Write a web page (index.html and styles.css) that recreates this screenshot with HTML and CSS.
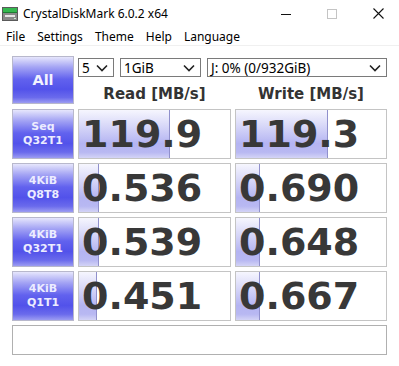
FILE: index.html
```html
<!DOCTYPE html>
<html lang="en">
<head>
    <meta charset="UTF-8">
    <title>CrystalDiskMark 6.0.2 x64</title>
    <link rel="stylesheet" href="styles.css">
</head>
<body>
    <div class="window">
        <div class="titlebar">
            <svg class="app-icon" width="16" height="14" viewBox="0 0 16 14">
                <rect x="0.5" y="0.5" width="15" height="13" fill="#8a8a8a" stroke="#5a5a5a"/>
                <rect x="1" y="1" width="14" height="4" fill="#35b84f"/>
                <rect x="1" y="5" width="14" height="1" fill="#1f7d33"/>
                <rect x="3" y="8" width="10" height="2" fill="#e6e6e6"/>
                <rect x="12" y="11" width="2" height="1" fill="#cfe9d4"/>
            </svg>
            <span class="title">CrystalDiskMark 6.0.2 x64</span>
            <div class="controls">
                <div class="ctrl">
                    <svg width="10" height="10" viewBox="0 0 10 10"><line x1="0" y1="5.5" x2="10" y2="5.5" stroke="#111" stroke-width="1"/></svg>
                </div>
                <div class="ctrl">
                    <svg width="10" height="10" viewBox="0 0 10 10"><rect x="0.5" y="0.5" width="9" height="9" fill="none" stroke="#c4c4c4" stroke-width="1"/></svg>
                </div>
                <div class="ctrl">
                    <svg width="11" height="11" viewBox="0 0 11 11"><path d="M0.5 0.5 L10.5 10.5 M10.5 0.5 L0.5 10.5" stroke="#111" stroke-width="1.1"/></svg>
                </div>
            </div>
        </div>

        <div class="menubar">
            <span class="menu-item">File</span>
            <span class="menu-item">Settings</span>
            <span class="menu-item">Theme</span>
            <span class="menu-item">Help</span>
            <span class="menu-item">Language</span>
        </div>

        <div class="main">
            <div class="row top-row">
                <div class="label all-btn">All</div>
                <div class="top-right">
                    <div class="combos">
                        <div class="combo combo-count"><span>5</span><svg width="12" height="8" viewBox="0 0 12 8"><polyline points="1,1.5 6,6.5 11,1.5" fill="none" stroke="#222" stroke-width="1.6"/></svg></div>
                        <div class="combo combo-size"><span>1GiB</span><svg width="12" height="8" viewBox="0 0 12 8"><polyline points="1,1.5 6,6.5 11,1.5" fill="none" stroke="#222" stroke-width="1.6"/></svg></div>
                        <div class="combo combo-drive"><span>J: 0% (0/932GiB)</span><svg width="12" height="8" viewBox="0 0 12 8"><polyline points="1,1.5 6,6.5 11,1.5" fill="none" stroke="#222" stroke-width="1.6"/></svg></div>
                    </div>
                    <div class="headers">
                        <div class="col-head">Read [MB/s]</div>
                        <div class="col-head">Write [MB/s]</div>
                    </div>
                </div>
            </div>

            <div class="row">
                <div class="label">Seq<br>Q32T1</div>
                <div class="value"><div class="meter" style="width: 91px"></div><span>119.9</span></div>
                <div class="value"><div class="meter" style="width: 92px"></div><span>119.3</span></div>
            </div>
            <div class="row">
                <div class="label">4KiB<br>Q8T8</div>
                <div class="value"><div class="meter" style="width: 20px"></div><span>0.536</span></div>
                <div class="value"><div class="meter" style="width: 24px"></div><span>0.690</span></div>
            </div>
            <div class="row">
                <div class="label">4KiB<br>Q32T1</div>
                <div class="value"><div class="meter" style="width: 20px"></div><span>0.539</span></div>
                <div class="value"><div class="meter" style="width: 24px"></div><span>0.648</span></div>
            </div>
            <div class="row">
                <div class="label">4KiB<br>Q1T1</div>
                <div class="value"><div class="meter" style="width: 18px"></div><span>0.451</span></div>
                <div class="value"><div class="meter" style="width: 24px"></div><span>0.667</span></div>
            </div>

            <div class="comment"></div>
        </div>
    </div>
</body>
</html>
```

FILE: styles.css
```css
* {
    box-sizing: border-box;
    margin: 0;
    padding: 0;
}

body {
    width: 399px;
    height: 366px;
    overflow: hidden;
    background-color: #fff;
    font-family: 'Noto Sans', 'Open Sans', sans-serif;
    color: #000;
}

.titlebar {
    display: flex;
    align-items: center;
    height: 27px;
    overflow: hidden;
}

.app-icon {
    margin-left: 2px;
    margin-top: 1px;
}

.title {
    margin-left: 5px;
    font-size: 12px;
    color: #000;
}

.controls {
    display: flex;
    margin-left: auto;
    margin-right: -2px;
    height: 27px;
}

.ctrl {
    width: 46px;
    display: flex;
    align-items: center;
    justify-content: center;
}

.menubar {
    display: flex;
    height: 19px;
    align-items: center;
    border-bottom: 1px solid #f0f0f0;
    font-size: 12px;
}

.menu-item {
    padding: 0 6px;
    line-height: 19px;
}

.main {
    padding: 10px 12px 0 12px;
}

.row {
    display: grid;
    grid-template-columns: 62px 153px 152px;
    column-gap: 4px;
    height: 50px;
    margin-bottom: 4px;
}

.top-row {
    height: 48px;
    margin-bottom: 5px;
}

.label {
    display: flex;
    align-items: center;
    justify-content: center;
    text-align: center;
    border: 1px solid #b8b8cc;
    background: linear-gradient(to bottom, #e6e6fc 0%, #a4a4f4 22%, #6262ee 48%, #5252ea 70%, #6a6aec 88%, #9c9cf2 100%);
    color: #ececff;
    font-family: 'DejaVu Sans', Verdana, sans-serif;
    font-weight: bold;
    font-size: 11px;
    line-height: 14px;
}

.all-btn {
    font-size: 14.5px;
    color: #f2f2ff;
}

.top-right {
    grid-column: 2 / 4;
    display: flex;
    flex-direction: column;
}

.combos {
    display: flex;
    gap: 6px;
    margin-top: 2px;
}

.combo {
    display: flex;
    align-items: center;
    justify-content: space-between;
    height: 19px;
    padding: 0 5px 0 3px;
    border: 1px solid #7a7a7a;
    background-color: #fff;
    font-size: 13.5px;
}

.combo-count {
    width: 36px;
}

.combo-size {
    width: 81px;
}

.combo-drive {
    flex: 1;
}

.headers {
    display: grid;
    grid-template-columns: 153px 152px;
    column-gap: 4px;
    margin-top: 7px;
}

.col-head {
    text-align: center;
    font-family: 'DejaVu Sans', Verdana, sans-serif;
    font-weight: bold;
    font-size: 15px;
    line-height: 20px;
    color: #333;
}

.value {
    position: relative;
    border: 1px solid #c4c4c4;
    background-color: #fff;
    padding-left: 3px;
    font-family: 'DejaVu Sans', Verdana, sans-serif;
    font-weight: bold;
    font-size: 38px;
    line-height: 48px;
    color: #383838;
    white-space: nowrap;
}

.value span {
    position: relative;
}

.meter {
    position: absolute;
    left: 0;
    top: 0;
    bottom: 0;
    background: linear-gradient(to bottom, #f6f6fe 0%, #d6d6f8 35%, #b4b4f2 70%, #b8b8f2 88%, #d4d4f6 100%);
    border-right: 1px solid #9090cc;
}

.comment {
    margin-top: 4px;
    width: 375px;
    height: 30px;
    border: 1px solid #b0b0b0;
    background-color: #fff;
}
```
